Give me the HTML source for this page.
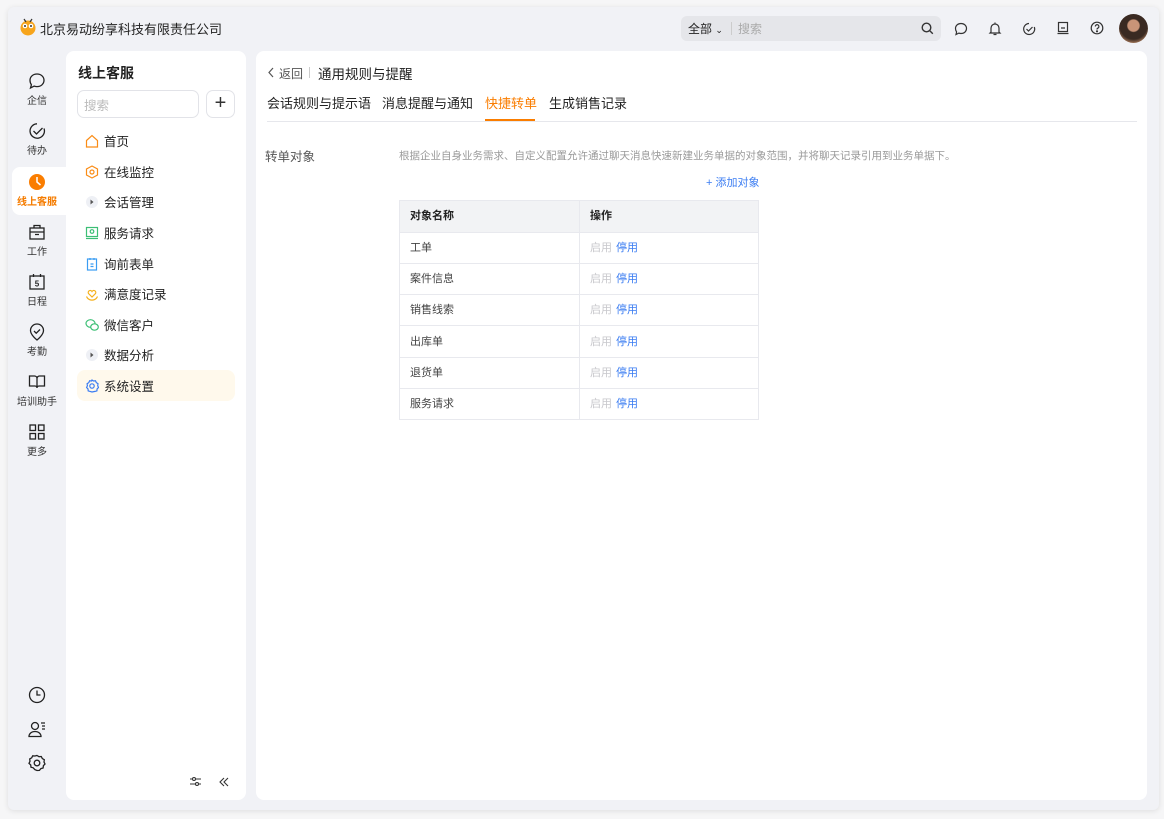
<!DOCTYPE html>
<html><head><meta charset="utf-8"><style>
*{margin:0;padding:0;box-sizing:border-box}
body{width:1164px;height:819px;background:#f6f6f7;font-family:"Liberation Sans","Noto Sans CJK SC",sans-serif;position:relative;overflow:hidden;color:#222}
.win{position:absolute;left:8px;top:7px;width:1151px;height:803px;background:#f1f2f6;border-radius:6px;box-shadow:0 1px 6px rgba(0,0,0,.1)}
.abs{position:absolute}
.t{position:absolute;white-space:nowrap}
.nav{position:absolute;left:8px;width:58px;text-align:center;font-size:10px;color:#333}
.nav svg{display:block;margin:0 auto 2px}
.panel{position:absolute;background:#fff;border-radius:8px}
.mi{position:absolute;left:85px;font-size:12.5px;color:#222;display:flex;align-items:center}
.mi svg{margin-right:5px}
table{border-collapse:collapse;position:absolute;left:399px;top:200px;width:360px;font-size:11px}
td{border:1px solid #e8e9ee;height:31.3px;padding-left:10px;color:#444;line-height:14px}
tr:first-child td{background:#f2f3f5;font-weight:bold;color:#222;height:31.5px}
.g{color:#c8c8cc}.b{color:#3a7cf2;margin-left:4px}
</style></head><body>
<div class="win"></div>
<svg class="abs" style="left:19px;top:18px" width="18" height="19" viewBox="0 0 18 19"><circle cx="9" cy="10" r="7.5" fill="#f7a51c"/><circle cx="6" cy="8" r="2.3" fill="#fff"/><circle cx="12" cy="8" r="2.3" fill="#fff"/><circle cx="6" cy="8" r="1" fill="#333"/><circle cx="12" cy="8" r="1" fill="#333"/><path d="M5 1l2 3M13 1l-2 3" stroke="#333" stroke-width="1.2"/></svg>
<div class="t" style="left:40px;top:19px;font-size:13px;color:#222">北京易动纷享科技有限责任公司</div>
<div class="abs" style="left:681px;top:16px;width:260px;height:25px;background:#e5e6ea;border-radius:6px"></div>
<div class="t" style="left:688px;top:20px;font-size:12px">全部 <span style="font-size:9px">&#8964;</span></div>
<div class="abs" style="left:731px;top:22px;width:1px;height:13px;background:#ccc"></div>
<div class="t" style="left:738px;top:20px;font-size:12px;color:#aaa">搜索</div>
<svg class="abs" style="left:921px;top:22px" width="13" height="13" viewBox="0 0 13 13" fill="none" stroke="#333" stroke-width="1.4"><circle cx="5.5" cy="5.5" r="4.3"/><path d="M8.8 8.8l3 3"/></svg>
<svg class="abs" style="left:954px;top:22px" width="14" height="14" viewBox="0 0 14 14" fill="none" stroke="#333" stroke-width="1.2"><path d="M7 1.5c3.3 0 5.5 2.2 5.5 5s-2.2 5-5.5 5c-.8 0-1.5-.1-2.2-.4L2 12.5l.6-2.5C1.9 9 1.5 7.9 1.5 6.5 1.5 3.7 3.7 1.5 7 1.5z"/></svg>
<svg class="abs" style="left:988px;top:21px" width="14" height="15" viewBox="0 0 14 15" fill="none" stroke="#333" stroke-width="1.2"><path d="M3 11V7a4 4 0 018 0v4l1 1H2zM7 1.5V3M5.5 13.5h3"/></svg>
<svg class="abs" style="left:1022px;top:22px" width="14" height="14" viewBox="0 0 14 14" fill="none" stroke="#333" stroke-width="1.2"><path d="M12.3 5A5.5 5.5 0 117 1.5"/><path d="M4.5 7l2 2 4-4"/></svg>
<svg class="abs" style="left:1056px;top:21px" width="14" height="14" viewBox="0 0 14 14" fill="none" stroke="#333" stroke-width="1.2"><rect x="2.5" y="1.5" width="9" height="9"/><path d="M1.5 12.5h11M5 7h4"/></svg>
<svg class="abs" style="left:1090px;top:21px" width="14" height="14" viewBox="0 0 14 14" fill="none" stroke="#333" stroke-width="1.2"><circle cx="7" cy="7" r="5.8"/><path d="M5.3 5.5a1.8 1.8 0 113 1.3c-.8.5-1.3.8-1.3 1.7"/><circle cx="7" cy="10.3" r=".5" fill="#333"/></svg>
<div class="abs" style="left:1119px;top:14px;width:29px;height:29px;border-radius:50%;background:radial-gradient(circle at 50% 40%,#c99478 0 25%,#3a2a22 30% 60%,#b08060 80%)"></div>
<div class="abs" style="left:12px;top:167px;width:54px;height:48px;background:#fff;border-radius:8px 0 0 8px"></div>
<div class="nav" style="top:72px"><svg width="18" height="18" viewBox="0 0 18 18" fill="none" stroke="#222" stroke-width="1.3"><path d="M9 2c4 0 7 2.7 7 6.3s-3 6.3-7 6.3c-1 0-1.9-.2-2.8-.5L2.5 16l.9-3.2C2.5 11.6 2 10.1 2 8.3 2 4.7 5 2 9 2z"/></svg>企信</div>
<div class="nav" style="top:122px"><svg width="18" height="18" viewBox="0 0 18 18" fill="none" stroke="#222" stroke-width="1.3"><path d="M16 6.5A7.2 7.2 0 119 1.8"/><path d="M5.5 9l3 3 6-6"/></svg>待办</div>
<div class="nav" style="top:173px;color:#f57c00;font-weight:bold"><svg width="18" height="18" viewBox="0 0 18 18"><circle cx="9" cy="9" r="8" fill="#fa7d00"/><path d="M9 4v5l3.5 3" stroke="#fff" stroke-width="1.5" fill="none"/></svg>线上客服</div>
<div class="nav" style="top:223px"><svg width="18" height="18" viewBox="0 0 18 18" fill="none" stroke="#222" stroke-width="1.3"><rect x="2" y="5" width="14" height="11"/><path d="M6 5V2.5h6V5M2 9h14M7 11.5h4"/></svg>工作</div>
<div class="nav" style="top:273px"><svg width="18" height="18" viewBox="0 0 18 18" fill="none" stroke="#222" stroke-width="1.3"><rect x="2" y="3" width="14" height="13"/><path d="M5.5 1v3M12.5 1v3"/><text x="9" y="13.5" font-size="8" text-anchor="middle" fill="#222" stroke="none" font-weight="bold">5</text></svg>日程</div>
<div class="nav" style="top:323px"><svg width="18" height="18" viewBox="0 0 18 18" fill="none" stroke="#222" stroke-width="1.3"><path d="M9 17s-6.5-5-6.5-9.5a6.5 6.5 0 0113 0C15.5 12 9 17 9 17z"/><path d="M6 8l2.2 2.2L12 6.5"/></svg>考勤</div>
<div class="nav" style="top:373px"><svg width="18" height="18" viewBox="0 0 18 18" fill="none" stroke="#222" stroke-width="1.3"><path d="M1.5 3h5a2.5 2.5 0 012.5 2.5V15a2 2 0 00-2-2H1.5zM16.5 3h-5A2.5 2.5 0 009 5.5V15a2 2 0 012-2h5.5z"/></svg>培训助手</div>
<div class="nav" style="top:423px"><svg width="18" height="18" viewBox="0 0 18 18" fill="none" stroke="#222" stroke-width="1.3"><rect x="2" y="2" width="5.5" height="5.5"/><rect x="10.5" y="2" width="5.5" height="5.5"/><rect x="2" y="10.5" width="5.5" height="5.5"/><rect x="10.5" y="10.5" width="5.5" height="5.5"/></svg>更多</div>
<svg class="abs" style="left:28px;top:686px" width="18" height="18" viewBox="0 0 18 18" fill="none" stroke="#222" stroke-width="1.3"><circle cx="9" cy="9" r="7.5"/><path d="M9 4.5V9h3.5"/></svg>
<svg class="abs" style="left:28px;top:720px" width="19" height="18" viewBox="0 0 19 18" fill="none" stroke="#222" stroke-width="1.3"><circle cx="7" cy="6" r="3.5"/><path d="M1 16.5c0-3 2.7-5 6-5s6 2 6 5zM13 3h4M14 6h3M14 9h3"/></svg>
<svg class="abs" style="left:28px;top:754px" width="18" height="18" viewBox="0 0 18 18" fill="none" stroke="#222" stroke-width="1.3"><path d="M9 1.5l2 1.2 2.3-.2 1 2 2 1.2-.3 2.3 1 2-1.6 1.7-.3 2.3-2.2.6-1.5 1.8L9 16.5l-2.2-.9-1.6-1.8-2.2-.6-.3-2.3L1 9.3l1-2L1.7 5l2-1.2 1-2 2.3.2z"/><circle cx="9" cy="9" r="2.8"/></svg>
<div class="panel" style="left:66px;top:51px;width:180px;height:749px"></div>
<div class="t" style="left:78px;top:63px;font-size:14px;font-weight:bold">线上客服</div>
<div class="abs" style="left:77px;top:90px;width:122px;height:28px;border:1px solid #e2e3e8;border-radius:7px"></div>
<div class="t" style="left:84px;top:95px;font-size:12.5px;color:#bbb">搜索</div>
<div class="abs" style="left:206px;top:90px;width:29px;height:28px;border:1px solid #e2e3e8;border-radius:7px;text-align:center;font-size:20px;line-height:25px;color:#333;font-weight:300">+</div>
<div class="abs" style="left:77px;top:370px;width:158px;height:31px;background:#fff9ec;border-radius:8px"></div>
<div class="mi" style="top:131px"><svg width="14" height="14" viewBox="0 0 14 14" fill="none" stroke="#fa8c16" stroke-width="1.2"><path d="M1.5 6.5L7 1.5l5.5 5V13h-11z"/></svg>首页</div>
<div class="mi" style="top:162px"><svg width="14" height="14" viewBox="0 0 14 14" fill="none" stroke="#fa8c16" stroke-width="1.2"><path d="M7 1l5.5 3v6L7 13 1.5 10V4z"/><circle cx="7" cy="7" r="2"/></svg>在线监控</div>
<div class="mi" style="top:192px"><svg width="14" height="14" viewBox="0 0 14 14"><circle cx="7" cy="7" r="6" fill="#eef0f5"/><path d="M5.5 4.5l3 2.5-3 2.5z" fill="#555"/></svg>会话管理</div>
<div class="mi" style="top:223px"><svg width="14" height="14" viewBox="0 0 14 14" fill="none" stroke="#3cbf75" stroke-width="1.2"><rect x="1.5" y="1.5" width="11" height="9"/><circle cx="7" cy="5.5" r="1.8"/><path d="M1 12.5h12"/></svg>服务请求</div>
<div class="mi" style="top:254px"><svg width="14" height="14" viewBox="0 0 14 14" fill="none" stroke="#3a9cf2" stroke-width="1.2"><rect x="2.5" y="2" width="9" height="11"/><path d="M5 1v2M9 1v2M5.5 7h3M5.5 9.5h3"/></svg>询前表单</div>
<div class="mi" style="top:284px"><svg width="14" height="14" viewBox="0 0 14 14" fill="none" stroke="#f5b01c" stroke-width="1.2"><path d="M7 10L3.5 6.5a2 2 0 013.5-2 2 2 0 013.5 2z"/><path d="M1.5 9.5a6 6 0 0011 0"/></svg>满意度记录</div>
<div class="mi" style="top:315px"><svg width="14" height="14" viewBox="0 0 14 14" fill="none" stroke="#3cbf75" stroke-width="1.2"><ellipse cx="5.5" cy="5.5" rx="4.5" ry="3.8"/><ellipse cx="9.5" cy="9" rx="3.8" ry="3.2" fill="#fff"/></svg>微信客户</div>
<div class="mi" style="top:345px"><svg width="14" height="14" viewBox="0 0 14 14"><circle cx="7" cy="7" r="6" fill="#eef0f5"/><path d="M5.5 4.5l3 2.5-3 2.5z" fill="#555"/></svg>数据分析</div>
<div class="mi" style="top:376px"><svg width="14" height="14" viewBox="0 0 14 14" fill="none" stroke="#3a7cf2" stroke-width="1.2"><path d="M7 1l1.5 1 2-.2.8 1.8 1.7 1.1-.3 2 .8 1.8-1.4 1.4-.2 2-1.9.5L7 13l-1.9-.6-1.9-.5-.2-2-1.4-1.4.8-1.8-.3-2 1.7-1.1.8-1.8 2 .2z"/><circle cx="7" cy="7" r="2.2"/></svg>系统设置</div>
<svg class="abs" style="left:189px;top:775px" width="13" height="13" viewBox="0 0 13 13" fill="none" stroke="#333" stroke-width="1.1"><path d="M1 4h11M1 9h11"/><circle cx="5" cy="4" r="1.5" fill="#fff"/><circle cx="8" cy="9" r="1.5" fill="#fff"/></svg>
<svg class="abs" style="left:218px;top:776px" width="12" height="12" viewBox="0 0 12 12" fill="none" stroke="#333" stroke-width="1.1"><path d="M6 2L2 6l4 4M10 2L6 6l4 4"/></svg>
<div class="panel" style="left:256px;top:51px;width:891px;height:749px"></div>
<svg class="abs" style="left:267px;top:67px" width="8" height="11" viewBox="0 0 8 11" fill="none" stroke="#555" stroke-width="1.2"><path d="M6 1L2 5.5 6 10"/></svg>
<div class="t" style="left:279px;top:65px;font-size:12px;color:#555">返回</div>
<div class="abs" style="left:309px;top:67px;width:1px;height:11px;background:#ccc"></div>
<div class="t" style="left:318px;top:63px;font-size:13.5px;color:#222">通用规则与提醒</div>
<div class="t" style="left:267px;top:93px;font-size:13px;color:#222">会话规则与提示语</div>
<div class="t" style="left:382px;top:93px;font-size:13px;color:#222">消息提醒与通知</div>
<div class="t" style="left:485px;top:93px;font-size:13px;color:#fa7d00">快捷转单</div>
<div class="t" style="left:549px;top:93px;font-size:13px;color:#222">生成销售记录</div>
<div class="abs" style="left:267px;top:121px;width:870px;height:1px;background:#e6e7ec"></div>
<div class="abs" style="left:485px;top:119px;width:50px;height:2px;background:#fa7d00"></div>
<div class="t" style="left:265px;top:146px;font-size:12.5px;color:#555">转单对象</div>
<div class="t" style="left:399px;top:148px;font-size:10.5px;color:#999">根据企业自身业务需求、自定义配置允许通过聊天消息快速新建业务单据的对象范围，并将聊天记录引用到业务单据下。</div>
<div class="t" style="left:706px;top:174px;font-size:11px;color:#3a7cf2">+ 添加对象</div>
<table>
<tr><td style="width:180px">对象名称</td><td>操作</td></tr>
<tr><td>工单</td><td><span class="g">启用</span><span class="b">停用</span></td></tr>
<tr><td>案件信息</td><td><span class="g">启用</span><span class="b">停用</span></td></tr>
<tr><td>销售线索</td><td><span class="g">启用</span><span class="b">停用</span></td></tr>
<tr><td>出库单</td><td><span class="g">启用</span><span class="b">停用</span></td></tr>
<tr><td>退货单</td><td><span class="g">启用</span><span class="b">停用</span></td></tr>
<tr><td>服务请求</td><td><span class="g">启用</span><span class="b">停用</span></td></tr>
</table>
</body></html>
